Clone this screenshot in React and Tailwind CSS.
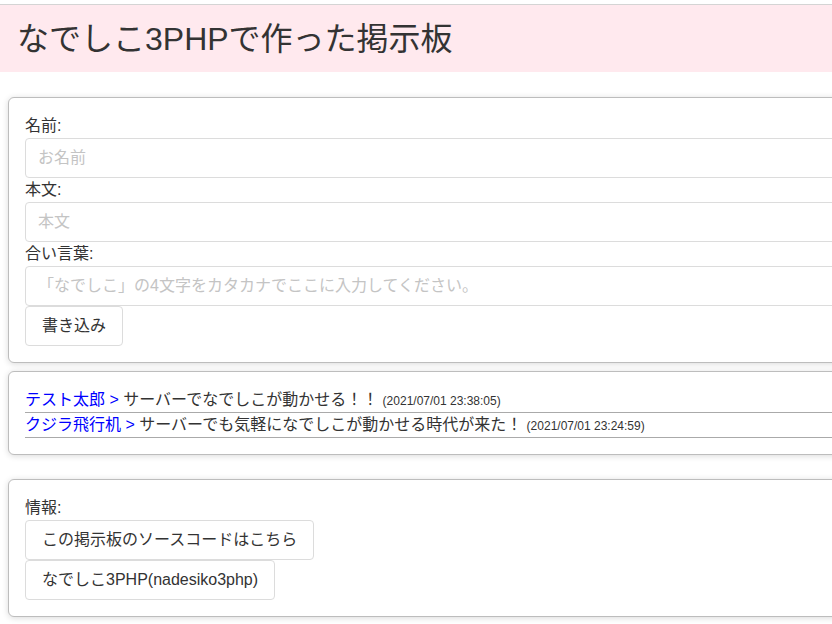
import React from 'react';

const font = { fontFamily: '"Liberation Sans", "Noto Sans CJK JP", sans-serif' };

const posts = [
  { name: 'テスト太郎', body: 'サーバーでなでしこが動かせる！！', date: '(2021/07/01 23:38:05)' },
  { name: 'クジラ飛行机', body: 'サーバーでも気軽になでしこが動かせる時代が来た！', date: '(2021/07/01 23:24:59)' },
];

const Box = ({ className = '', children }) => (
  <div
    className={
      'ml-2 w-[1000px] rounded-md border border-[#bdbdbd] bg-white p-4 shadow-[0_1px_6px_rgba(0,0,0,0.15)] ' +
      className
    }
  >
    {children}
  </div>
);

const Field = ({ label, placeholder }) => (
  <>
    <div className="h-6 leading-6">{label}</div>
    <input
      className="block h-10 w-full rounded-[4px] border border-[#dcdcdc] px-3 text-[16px] outline-none placeholder:text-[#c4c4c4]"
      placeholder={placeholder}
      style={font}
    />
  </>
);

const Button = ({ children }) => (
  <button
    className="block h-10 rounded-[4px] border border-[#dcdcdc] bg-white px-4 text-[16px] leading-6 text-[#333]"
    style={font}
  >
    {children}
  </button>
);

export default function App() {
  return (
    <div className="w-[832px] h-[624px] overflow-hidden bg-white text-[16px] text-[#333]" style={font}>
      <div className="mt-1 h-[68px] border-t border-[#d4d4d4] bg-[#ffe9ee] flex items-center pl-[17px]">
        <h1 className="text-[32px] leading-none text-[#333]">なでしこ3PHPで作った掲示板</h1>
      </div>

      <div className="mt-[25px]">
        <Box>
          <Field label="名前:" placeholder="お名前" />
          <Field label="本文:" placeholder="本文" />
          <Field label="合い言葉:" placeholder="「なでしこ」の4文字をカタカナでここに入力してください。" />
          <Button>書き込み</Button>
        </Box>
      </div>

      <div className="mt-2">
        <Box>
          {posts.map((p) => (
            <div key={p.date} className="h-[25px] border-b border-[#aaaaaa] leading-6 whitespace-nowrap">
              <span className="text-[#0000ff]">{p.name} &gt;</span> {p.body}{' '}
              <span className="text-[12px]">{p.date}</span>
            </div>
          ))}
        </Box>
      </div>

      <div className="mt-6">
        <Box>
          <div className="h-6 leading-6">情報:</div>
          <Button>この掲示板のソースコードはこちら</Button>
          <Button>なでしこ3PHP(nadesiko3php)</Button>
        </Box>
      </div>
    </div>
  );
}
